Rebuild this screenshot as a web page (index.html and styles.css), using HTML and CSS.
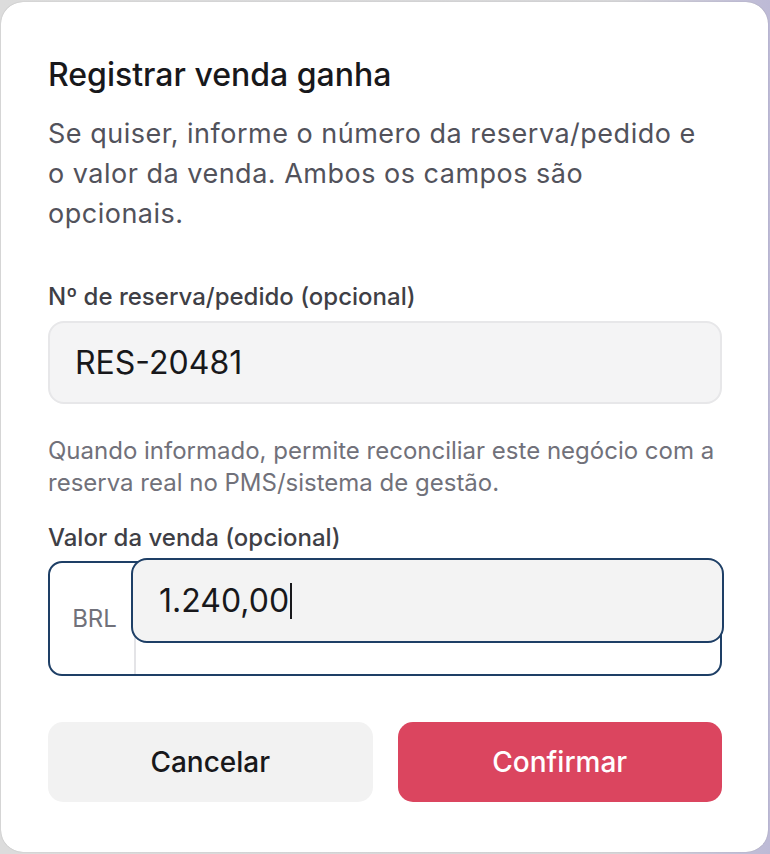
FILE: index.html
```html
<!DOCTYPE html>
<html lang="pt-BR">
<head>
<meta charset="utf-8">
<link rel="stylesheet" href="styles.css">
</head>
<body>
<div class="dialog">
  <h2 class="title">Registrar venda ganha</h2>
  <p class="desc">Se quiser, informe o número da reserva/pedido e o valor da venda. Ambos os campos são opcionais.</p>
  <div class="field">
    <label class="label">Nº de reserva/pedido (opcional)</label>
    <div class="input">RES-20481</div>
    <p class="hint">Quando informado, permite reconciliar este negócio com a reserva real no PMS/sistema de gestão.</p>
  </div>
  <div class="field field-second">
    <label class="label">Valor da venda (opcional)</label>
    <div class="group">
      <div class="addon">BRL</div>
      <div class="group-main">
        <div class="input focused">1.240,00<span class="caret"></span></div>
      </div>
    </div>
  </div>
  <div class="actions">
    <button class="btn btn-cancel">Cancelar</button>
    <button class="btn btn-confirm">Confirmar</button>
  </div>
</div>
</body>
</html>
```
FILE: styles.css
```css
* { box-sizing: border-box; }
html, body { margin: 0; height: 100%; }
body {
  background: linear-gradient(90deg, #dcdcdc 0%, #d6d6d8 80%, #bdbad6 100%);
  font-family: Inter, "Noto Sans", sans-serif;
  padding: 2px 2px 2px 1px;
}
.dialog {
  background: #fff;
  border-radius: 22px;
  height: 850px;
  padding: 53px 46px 0 47px;
  box-shadow: 0 0 1px rgba(0,0,0,0.3);
}
.title {
  margin: 0;
  font-size: 32px;
  line-height: 40px;
  font-weight: 500;
  color: #18181b;
}
.desc {
  margin: 19px 0 0;
  padding-right: 16px;
  font-size: 27px;
  letter-spacing: 0.5px;
  line-height: 40px;
  color: #52525b;
}
.field { margin-top: 48px; }
.field-second { margin-top: 24px; }
.label {
  display: block;
  font-size: 24px;
  line-height: 30px;
  font-weight: 500;
  color: #3f3f46;
}
.input {
  margin-top: 9px;
  height: 83px;
  background: #f4f4f5;
  border: 2px solid #e7e7e9;
  border-radius: 16px;
  padding: 0 25px;
  display: flex;
  align-items: center;
  font-size: 32px;
  color: #18181b;
}
.hint {
  margin: 31px 0 0;
  font-size: 24px;
  line-height: 32px;
  color: #71717a;
}
.group {
  margin-top: 8px;
  height: 115px;
  border: 2px solid #1e3f66;
  border-radius: 14px;
  display: flex;
}
.addon {
  width: 86px;
  padding-left: 5px;
  display: flex;
  align-items: center;
  justify-content: center;
  font-size: 24px;
  color: #71717a;
  border-right: 2px solid #e4e4e7;
}
.group-main { flex: 1; position: relative; }
.input.focused {
  position: absolute;
  left: -5px;
  right: -4px;
  top: -5px;
  margin: 0;
  height: 85px;
  background: #f3f3f3;
  border: 2px solid #1e3f66;
  border-radius: 16px;
  padding: 0 26px;
}
.caret {
  display: inline-block;
  width: 2px;
  height: 36px;
  background: #18181b;
  margin-left: 1px;
}
.actions {
  margin-top: 46px;
  display: grid;
  grid-template-columns: 1fr 1fr;
  gap: 25px;
}
.btn {
  height: 80px;
  border: none;
  border-radius: 15px;
  font-family: inherit;
  font-size: 28px;
  font-weight: 500;
}
.btn-cancel { background: #f2f2f2; color: #18181b; }
.btn-confirm { background: #db455f; color: #fff; }
```
